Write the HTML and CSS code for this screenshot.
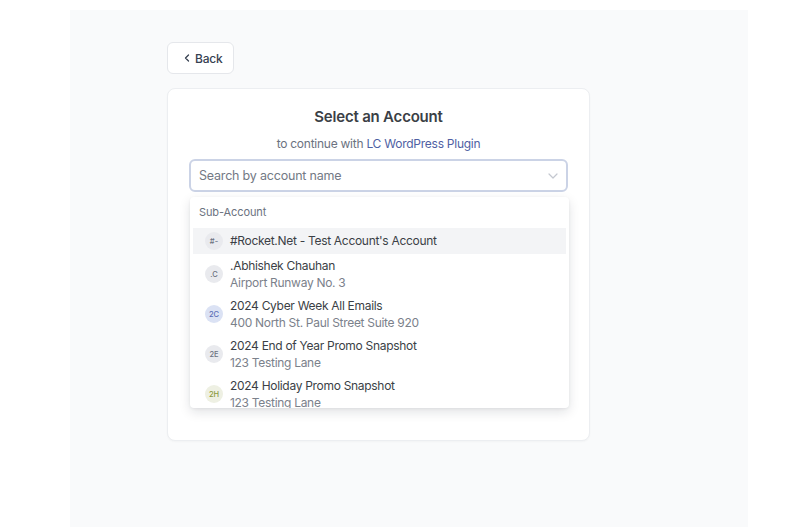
FILE: index.html
```html
<!DOCTYPE html>
<html lang="en">
<head>
  <meta charset="UTF-8">
  <title>Select an Account</title>
  <meta name="viewport" content="width=device-width, initial-scale=1">
  <link rel="stylesheet" href="styles.css">
</head>
<body>
  <div class="panel">
    <button type="button" class="back">
      <svg width="8" height="8" viewBox="0 0 8 8"><path d="M5.5 1 L2.5 4 L5.5 7" fill="none" stroke="#374151" stroke-width="1.3" stroke-linecap="round" stroke-linejoin="round"/></svg>
      Back
    </button>

    <div class="card">
      <h1>Select an Account</h1>
      <p class="subtitle">to continue with <a href="#">LC WordPress Plugin</a></p>

      <div class="picker">
        <div class="search">
          <input type="text" placeholder="Search by account name">
          <svg class="chevron" width="10" height="6" viewBox="0 0 10 6"><path d="M1 1 L5 5 L9 1" fill="none" stroke="#c4c8d0" stroke-width="1.2" stroke-linecap="round" stroke-linejoin="round"/></svg>
        </div>

        <div class="dropdown">
          <div class="group-label">Sub-Account</div>
          <div class="option active">
            <span class="avatar">#-</span>
            <div class="option-text">
              <div class="name">#Rocket.Net - Test Account's Account</div>
            </div>
          </div>
          <div class="option">
            <span class="avatar">.C</span>
            <div class="option-text">
              <div class="name">.Abhishek Chauhan</div>
              <div class="address">Airport Runway No. 3</div>
            </div>
          </div>
          <div class="option">
            <span class="avatar blue">2C</span>
            <div class="option-text">
              <div class="name">2024 Cyber Week All Emails</div>
              <div class="address">400 North St. Paul Street Suite 920</div>
            </div>
          </div>
          <div class="option">
            <span class="avatar">2E</span>
            <div class="option-text">
              <div class="name">2024 End of Year Promo Snapshot</div>
              <div class="address">123 Testing Lane</div>
            </div>
          </div>
          <div class="option">
            <span class="avatar olive">2H</span>
            <div class="option-text">
              <div class="name">2024 Holiday Promo Snapshot</div>
              <div class="address">123 Testing Lane</div>
            </div>
          </div>
        </div>
      </div>
    </div>
  </div>
</body>
</html>
```

FILE: styles.css
```css
body {
  font-family: Inter, "Noto Sans", Arial, sans-serif;
  margin: 0;
  background: #fff;
  color: #374151;
}

.panel {
  margin: 10px 0 0 70px;
  width: 581px;
  height: 485px;
  padding: 32px 0 0 97px;
  background: #f9fafb;
}

.back {
  display: flex;
  align-items: center;
  gap: 4px;
  width: 67px;
  height: 32px;
  padding: 0 0 0 15px;
  background: #fff;
  border: 1px solid #e5e7eb;
  border-radius: 6px;
  font-family: inherit;
  font-size: 12px;
  font-weight: 500;
  letter-spacing: -0.2px;
  color: #374151;
  cursor: pointer;
}

.card {
  margin-top: 14px;
  width: 379px;
  height: 333px;
  padding: 18px 21px 0 21px;
  background: #fff;
  border: 1px solid #eceef1;
  border-radius: 8px;
  box-shadow: 0 1px 2px rgba(0, 0, 0, 0.03);
}

h1 {
  margin: 0;
  text-align: center;
  font-size: 15px;
  line-height: 20px;
  font-weight: 600;
  letter-spacing: -0.2px;
  color: #3b3f46;
}

.subtitle {
  margin: 9px 0 0;
  text-align: center;
  font-size: 12px;
  line-height: 16px;
  letter-spacing: -0.25px;
  color: #6b7280;
}

.subtitle a {
  color: #4f5fa3;
  text-decoration: none;
}

.picker {
  position: relative;
  margin-top: 7px;
}

.search {
  display: flex;
  align-items: center;
  height: 29px;
  padding: 0 8px 0 8px;
  border: 2px solid #cbd3e6;
  border-radius: 6px;
  background: #fff;
}

.search input {
  flex: 1;
  border: none;
  outline: none;
  padding: 0;
  font-family: inherit;
  font-size: 12.5px;
  letter-spacing: -0.2px;
  color: #374151;
  background: transparent;
}

.search input::placeholder {
  color: #737985;
}

.dropdown {
  position: absolute;
  top: 38px;
  left: 1px;
  width: 379px;
  height: 211px;
  overflow: hidden;
  background: #fff;
  border-radius: 4px;
  box-shadow: 0 4px 12px rgba(17, 24, 39, 0.12), 0 1px 3px rgba(17, 24, 39, 0.06);
}

.group-label {
  padding: 8px 0 0 9px;
  font-size: 11px;
  line-height: 14px;
  letter-spacing: -0.1px;
  color: #6b7280;
}

.option {
  display: flex;
  align-items: center;
  gap: 7px;
  margin: 0 3px;
  height: 40px;
  padding: 0 0 0 12px;
}

.option.active {
  margin-top: 9px;
  height: 26px;
  background: #f3f4f6;
}

.avatar {
  display: flex;
  align-items: center;
  justify-content: center;
  flex: none;
  width: 18px;
  height: 18px;
  border-radius: 50%;
  background: #e9eaee;
  color: #6b7280;
  font-size: 7.5px;
  font-weight: 500;
}

.avatar.blue {
  background: #dbe2f4;
  color: #5c6fb6;
}

.avatar.olive {
  background: #eef0e3;
  color: #8c9a3c;
}

.name {
  font-size: 12px;
  line-height: 16px;
  letter-spacing: -0.3px;
  color: #3b3f46;
}

.address {
  margin-top: 1px;
  font-size: 12px;
  line-height: 16px;
  letter-spacing: -0.3px;
  color: #7b818b;
}
```
